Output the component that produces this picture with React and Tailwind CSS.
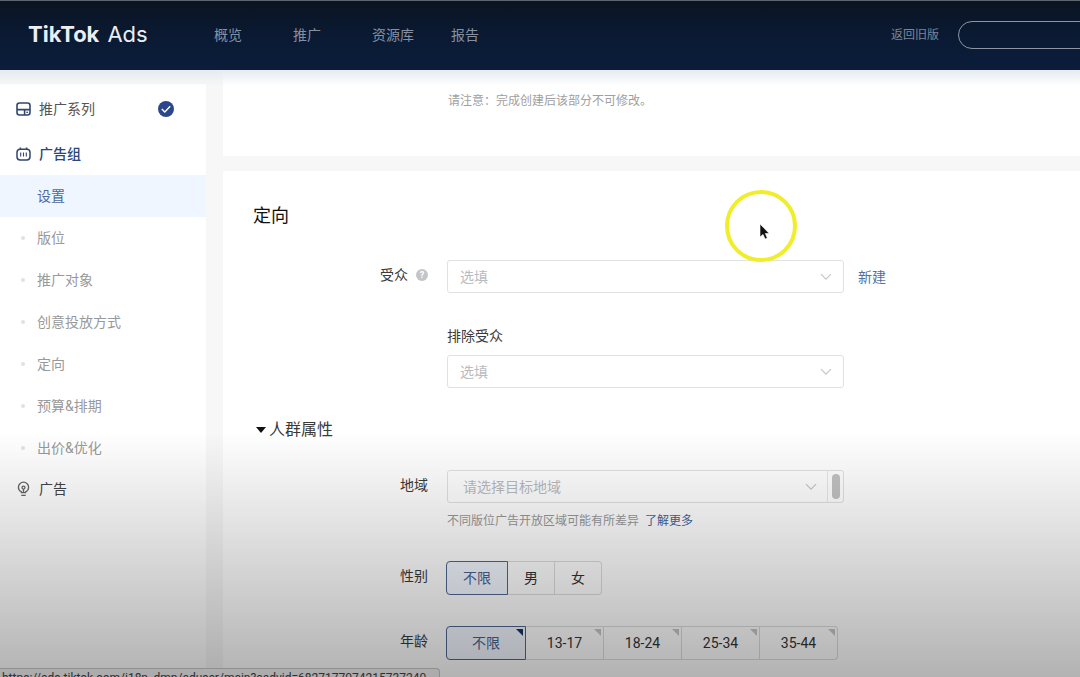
import React, { useState } from 'react';

const navItems = ['概览', '推广', '资源库', '报告'];
const steps = ['设置', '版位', '推广对象', '创意投放方式', '定向', '预算&排期', '出价&优化'];
const genders = ['不限', '男', '女'];
const ages = ['不限', '13-17', '18-24', '25-34', '35-44'];

const CampaignIcon = () => (
  <svg width="15" height="14" viewBox="0 0 15 14" fill="none" stroke="#33466f" strokeWidth="1.6">
    <rect x="1" y="1" width="13" height="12" rx="2.5" />
    <path d="M1 7.6h13M8.6 7.6V13" />
    <path d="M10.3 10.3h1.8" strokeWidth="1.2" />
  </svg>
);

const AdGroupIcon = () => (
  <svg width="15" height="14" viewBox="0 0 15 14" fill="none" stroke="#33466f" strokeWidth="1.5">
    <rect x="1" y="2.2" width="13" height="10.8" rx="3.2" />
    <path d="M4.4 0.6v2M10.6 0.6v2" />
    <path d="M4.7 5.6v3.8M7.5 5.6v3.8M10.3 5.6v3.8" strokeWidth="1.1" />
  </svg>
);

const AdIcon = () => (
  <svg width="15" height="16" viewBox="0 0 15 16" fill="none" stroke="#666" strokeWidth="1.3">
    <path d="M5.4 11.6V10.8C3.500 10 2.400 8.300 2.400 6.300a5.100 5.100 0 0 1 10.200 0c0 2-1.100 3.700-3 4.500v.8z" />
    <circle cx="7.500" cy="6.600" r="1.500" />
    <path d="M7.500 8.100v3.500M5.300 14.300h4.400" />
  </svg>
);

const CheckIcon = () => (
  <svg width="16" height="16" viewBox="0 0 16 16" fill="none">
    <circle cx="8" cy="8" r="8" fill="#2b478b" />
    <path d="M3.800 7.900l3 3 5.400-5.600" stroke="#fff" strokeWidth="1.400" />
  </svg>
);

const Chevron = () => (
  <svg width="12" height="8" viewBox="0 0 12 8" fill="none" stroke="#c4c6ca" strokeWidth="1.2">
    <path d="M1 1.200l5 5 5-5" />
  </svg>
);

const SelectBox = ({ id, placeholder, scroll }) => (
  <div className="relative flex h-[33px] w-[397px] rounded-[3px] border border-[#e0e1e3]">
    <select
      id={id}
      className={`h-full min-w-0 flex-1 appearance-none bg-transparent text-sm text-[#b9bbbf] outline-none ${scroll ? 'border-r border-[#e6e7e9] pl-[15px]' : 'pl-3'}`}
    >
      <option>{placeholder}</option>
    </select>
    <span className={`pointer-events-none absolute inset-y-0 flex items-center ${scroll ? 'right-[26px]' : 'right-[11px]'}`}>
      <Chevron />
    </span>
    {scroll && (
      <span className="flex w-[15px] items-center justify-center">
        <span className="h-[25px] w-2 rounded-full bg-[#c2c2c2]" />
      </span>
    )}
  </div>
);

const FormRow = ({ label, htmlFor, help, className, children }) => (
  <div className={`flex gap-[19px] ${className}`}>
    <div className="flex h-[29px] w-[205px] shrink-0 items-center justify-end gap-2">
      <label htmlFor={htmlFor} className="text-sm text-[#3a3a3a]">{label}</label>
      {help && (
        <span className="flex size-3 items-center justify-center rounded-full bg-[#c4c5c8] text-[9px] leading-3 font-bold text-white">?</span>
      )}
    </div>
    <div>{children}</div>
  </div>
);

const RadioGroup = ({ name, options, value, onChange, cell, corner }) => (
  <div role="radiogroup" aria-label={name} className="-ml-px flex h-[34px]">
    {options.map((option, index) => (
      <label
        key={option}
        className={`relative flex items-center justify-center text-sm ${cell} ${
          option === value
            ? 'border border-[#4f6691] bg-[#f2f7ff] text-[#4a628f]'
            : 'border-y border-r border-[#dcdcde] text-[#333]'
        } ${index === 0 ? 'rounded-l-[4px]' : ''} last:rounded-r-[4px]`}
      >
        <input
          type="radio"
          name={name}
          checked={option === value}
          onChange={() => onChange(option)}
          className="sr-only"
        />
        {option}
        {corner && (
          <svg width="7" height="7" viewBox="0 0 7 7" className="absolute top-0.5 right-0.5">
            <path d="M0 0h7v7z" fill={option === value ? '#1c3263' : '#c6c6c6'} />
          </svg>
        )}
      </label>
    ))}
  </div>
);

const Header = () => (
  <header className="relative z-10 flex h-[70px] shrink-0 items-center border-t border-[#5d666c] bg-linear-to-b from-[#0a1422] via-[#0a1a33] to-[#0b1d3b] pb-0.5 pl-7">
    <div className="flex w-[186px] gap-2 font-['Inter',sans-serif] text-[22px] text-[#eceef2]">
      <span className="font-bold">TikTok</span>
      <span>Ads</span>
    </div>
    <nav className="flex flex-1 text-sm text-[#8790a0]">
      {navItems.map((item) => (
        <a key={item} href="#" className="w-[79px]">{item}</a>
      ))}
    </nav>
    <a href="#" className="mr-[19px] text-xs text-[#7d8696]">返回旧版</a>
    <button aria-label="账户" className="-mr-5 h-7 w-[142px] rounded-full border border-[#8d95a5]" />
    <div className="pointer-events-none absolute inset-x-0 top-full h-4 bg-linear-to-b from-[#e6ebf0] to-transparent" />
  </header>
);

const Sidebar = () => (
  <aside className="mt-3.5 w-[206px] shrink-0 bg-white text-sm">
    <a href="#" className="flex h-[49px] items-center gap-2 pr-8 pl-4 text-[#555]">
      <CampaignIcon />
      <span className="flex-1">推广系列</span>
      <CheckIcon />
    </a>
    <a href="#" className="flex h-[42px] items-center gap-2 pl-4 font-medium text-[#2c4679]">
      <AdGroupIcon />
      <span>广告组</span>
    </a>
    {steps.map((step, index) => (
      <a
        key={step}
        href="#"
        className={`flex h-[42px] items-center pl-[21px] ${index === 0 ? 'bg-[#eff6ff] text-[#4d689b]' : 'text-[#999]'}`}
      >
        <span className={`mr-3 size-1 rounded-full ${index === 0 ? '' : 'bg-[#e2e2e2]'}`} />
        {step}
      </a>
    ))}
    <a href="#" className="flex h-10 items-center gap-2 pl-4 text-[#444]">
      <AdIcon />
      <span>广告</span>
    </a>
  </aside>
);

const App = () => {
  const [gender, setGender] = useState('不限');
  const [age, setAge] = useState('不限');

  return (
    <div className="relative flex h-screen flex-col overflow-hidden bg-[#f7f7f7] font-['Roboto','Noto_Sans_CJK_SC',sans-serif]">
      <Header />
      <div className="flex min-h-0 flex-1">
        <Sidebar />
        <main className="ml-[17px] flex min-w-0 flex-1 flex-col gap-[15px]">
          <section className="bg-white pt-[21px] pb-[45px] pl-[225px]">
            <p className="text-xs leading-5 text-[#a0a0a0]">请注意：完成创建后该部分不可修改。</p>
          </section>

          <section className="flex-1 bg-white pt-[30px]">
            <h2 className="pl-[30px] text-lg leading-[30px] text-[#111]">定向</h2>

            <FormRow label="受众" htmlFor="audience" help className="mt-[29px]">
              <div className="flex items-center gap-3.5">
                <SelectBox id="audience" placeholder="选填" />
                <a href="#" className="text-sm text-[#5470a3]">新建</a>
              </div>
              <label htmlFor="exclude" className="mt-[33px] mb-[9px] block text-sm leading-5 text-[#3a3a3a]">排除受众</label>
              <SelectBox id="exclude" placeholder="选填" />
            </FormRow>

            <button className="mt-[30px] ml-[33px] flex h-6 items-center gap-[3px] text-base text-[#3a3a3a]">
              <svg width="10" height="6" viewBox="0 0 10 6">
                <path d="M0 0h10L5 6z" fill="#111" />
              </svg>
              人群属性
            </button>

            <FormRow label="地域" htmlFor="region" className="mt-7">
              <SelectBox id="region" placeholder="请选择目标地域" scroll />
              <p className="mt-2 text-xs leading-5 text-[#999]">
                不同版位广告开放区域可能有所差异
                <a href="#" className="ml-1.5 text-[#44629c]">了解更多</a>
              </p>
            </FormRow>

            <FormRow label="性别" className="mt-[30px]">
              <RadioGroup name="性别" options={genders} value={gender} onChange={setGender} cell="w-[47px] first:w-[62px]" />
            </FormRow>

            <FormRow label="年龄" className="mt-[31px]">
              <RadioGroup name="年龄" options={ages} value={age} onChange={setAge} cell="w-[78px] first:w-20" corner />
            </FormRow>
          </section>
        </main>
      </div>

      {/* link preview of the browser */}
      <div className="absolute bottom-0 left-0 h-[9px] w-[440px] overflow-hidden rounded-tr border-t border-r border-[#c9c9c9] bg-[#f4f4f4] pt-px pl-0.5 text-xs leading-4 whitespace-nowrap text-[#444]">
        https://ads.tiktok.com/i18n_dmp/aduser/main?aadvid=6827177074215737240
      </div>

      <div className="pointer-events-none absolute inset-x-0 bottom-0 h-[245px] bg-linear-to-b from-black/0 to-black/30" />

      <svg width="74" height="74" viewBox="0 0 74 74" className="pointer-events-none absolute top-[189px] left-[724px]">
        <circle cx="37" cy="37" r="34" fill="none" stroke="#f0ee2b" strokeWidth="4" />
        <path d="M36 35v13l3-2.600 2.100 4.600 2.200-1-2-4.500h3.900z" fill="#111" stroke="#fff" strokeWidth="0.600" />
      </svg>
    </div>
  );
};

export default App;
